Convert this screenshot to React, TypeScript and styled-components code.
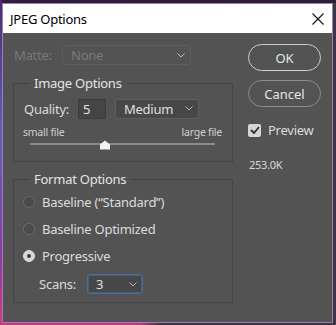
import React from "react";
import styled, { createGlobalStyle } from "styled-components";

const GlobalStyle = createGlobalStyle`
  html, body {
    margin: 0;
    padding: 0;
  }
  body {
    width: 336px;
    height: 325px;
    overflow: hidden;
    background: #3a3840;
    font-family: "Noto Sans", "Open Sans", sans-serif;
  }
`;

const Backdrop = styled.div`
  width: 336px;
  height: 325px;
  padding: 3px 3px 2px 2px;
  box-sizing: border-box;
  background:
    linear-gradient(90deg, #c2387c 0 140px, #3a3840 160px) left bottom / 100% 2px no-repeat,
    linear-gradient(180deg, #4a2f66 0%, #5a62b6 40%, #8b3f9c 80%, #d23b7c 100%) left top / 2px 100% no-repeat,
    linear-gradient(90deg, #2e1f3c 0%, #2a2230 100%) left top / 100% 3px no-repeat,
    #3a3a3e;
`;

const Dialog = styled.div`
  width: 331px;
  height: 320px;
  box-sizing: border-box;
  border: 1px solid #a676c6;
  display: flex;
  flex-direction: column;
  background: #535353;
  letter-spacing: -0.25px;
`;

const TitleBar = styled.div`
  height: 29px;
  background: #ffffff;
  display: flex;
  align-items: center;
  justify-content: space-between;
  padding: 0 8px 0 7px;
  color: #000;
  font-size: 13px;
`;

const Body = styled.div`
  flex: 1;
  display: flex;
  padding-left: 10px;
  gap: 15px;
`;

const LeftColumn = styled.div`
  width: 220px;
  display: flex;
  flex-direction: column;
`;

const RightColumn = styled.div`
  width: 73px;
  display: flex;
  flex-direction: column;
  padding-top: 11px;
`;

const MatteRow = styled.div`
  margin-top: 12px;
  height: 20px;
  display: flex;
  align-items: center;
  padding-left: 1px;
`;

const Label = styled.span<{ $disabled?: boolean; $width?: number }>`
  font-size: 13px;
  color: ${(p) => (p.$disabled ? "#787878" : "#dcdcdc")};
  ${(p) => (p.$width ? `width: ${p.$width}px;` : "")}
  flex-shrink: 0;
`;

const Select = styled.div<{ $width: number; $disabled?: boolean; $focused?: boolean }>`
  width: ${(p) => p.$width}px;
  height: 20px;
  box-sizing: border-box;
  border: 1px solid ${(p) => (p.$focused ? "#4d6d93" : p.$disabled ? "#5e5e5e" : "#5f5f5f")};
  ${(p) => (p.$focused ? "box-shadow: inset 0 0 0 1px #44607f;" : "")}
  border-radius: 3px;
  background: ${(p) => (p.$disabled ? "#535353" : "#474747")};
  display: flex;
  align-items: center;
  justify-content: space-between;
  padding: 0 5px 0 8px;
  font-size: 13px;
  color: ${(p) => (p.$disabled ? "#7a7a7a" : "#e0e0e0")};
`;

const Group = styled.fieldset<{ $top: number }>`
  margin: ${(p) => p.$top}px 0 0 0;
  padding: 0 10px;
  border: 1px solid #444444;
  min-width: 0;
`;

const Legend = styled.legend`
  margin-left: 6px;
  padding: 0 4px;
  font-size: 13px;
  line-height: 18px;
  color: #e4e4e4;
`;

const QualityRow = styled.div`
  margin-top: 6px;
  display: flex;
  align-items: center;
  height: 21px;
`;

const NumberBox = styled.div`
  margin-left: 11px;
  width: 28px;
  height: 20px;
  box-sizing: border-box;
  background: #454545;
  border: 1px solid #3c3c3c;
  font-size: 13px;
  color: #e6e6e6;
  display: flex;
  align-items: center;
  padding-left: 4px;
`;

const SliderLabels = styled.div`
  margin-top: 7px;
  margin-left: -1px;
  display: flex;
  justify-content: space-between;
  font-size: 10.5px;
  line-height: 13px;
  color: #d0d0d0;
`;

const SliderTrack = styled.div`
  position: relative;
  margin: 4px 7px 0 6px;
  height: 2px;
  background: #8a8a8a;
`;

const SliderThumb = styled.svg`
  position: absolute;
  top: -3px;
  width: 12px;
  height: 10px;
  margin-left: -6px;
`;

const SliderArea = styled.div`
  padding-bottom: 16px;
`;

const RadioRow = styled.div<{ $top: number }>`
  margin-top: ${(p) => p.$top}px;
  height: 20px;
  display: flex;
  align-items: center;
  gap: 7px;
  margin-left: -1px;
`;

const RadioDot = styled.span<{ $checked?: boolean }>`
  width: 12px;
  height: 12px;
  box-sizing: border-box;
  border-radius: 50%;
  border: 1px solid ${(p) => (p.$checked ? "#d8d8d8" : "#6a6a6a")};
  background: ${(p) => (p.$checked ? "#d8d8d8" : "#4a4a4a")};
  display: flex;
  align-items: center;
  justify-content: center;
  &::after {
    content: "";
    width: 4px;
    height: 4px;
    border-radius: 50%;
    background: ${(p) => (p.$checked ? "#3a3a3a" : "transparent")};
  }
`;

const ScansRow = styled.div`
  margin-top: 8px;
  margin-bottom: 8px;
  height: 20px;
  display: flex;
  align-items: center;
  padding-left: 15px;
`;

const PillButton = styled.button<{ $primary?: boolean; $top?: number }>`
  margin-top: ${(p) => p.$top ?? 0}px;
  width: 73px;
  height: 27px;
  border-radius: 14px;
  border: 1px solid ${(p) => (p.$primary ? "#cfcfcf" : "#8c8c8c")};
  background: transparent;
  color: #e6e6e6;
  font-family: "Noto Sans", "Open Sans", sans-serif;
  font-size: 13px;
  padding: 0;
`;

const CheckRow = styled.div`
  margin-top: 16px;
  display: flex;
  align-items: center;
  gap: 7px;
  height: 14px;
`;

const CheckBox = styled.span`
  width: 13px;
  height: 13px;
  border-radius: 2px;
  background: #d6d6d6;
  display: flex;
  align-items: center;
  justify-content: center;
`;

const FileSize = styled.div`
  margin-top: 20px;
  margin-left: 1px;
  font-size: 11px;
  color: #d8d8d8;
`;

const Chevron = () => (
  <svg width="8" height="5" viewBox="0 0 8 5">
    <path d="M0.5 0.5 L4 4 L7.5 0.5" fill="none" stroke="#b8b8b8" strokeWidth="1" />
  </svg>
);

export default function App() {
  const quality = 5;
  const thumbPos = ((quality - 0.5) / 12) * 100 + 3;
  return (
    <>
      <GlobalStyle />
      <Backdrop>
        <Dialog>
          <TitleBar>
            <span>JPEG Options</span>
            <svg width="12" height="12" viewBox="0 0 12 12">
              <path d="M0.5 0.5 L11.5 11.5 M11.5 0.5 L0.5 11.5" stroke="#111" strokeWidth="1.1" />
            </svg>
          </TitleBar>
          <Body>
            <LeftColumn>
              <MatteRow>
                <Label $disabled $width={48}>Matte:</Label>
                <Select $width={129} $disabled>
                  <span>None</span>
                  <Chevron />
                </Select>
              </MatteRow>

              <Group $top={9}>
                <Legend>Image Options</Legend>
                <QualityRow>
                  <Label $width={43}>Quality:</Label>
                  <NumberBox>{quality}</NumberBox>
                  <Select $width={84} style={{ marginLeft: 9 }}>
                    <span>Medium</span>
                    <Chevron />
                  </Select>
                </QualityRow>
                <SliderArea>
                  <SliderLabels>
                    <span>small file</span>
                    <span>large file</span>
                  </SliderLabels>
                  <SliderTrack>
                    <SliderThumb viewBox="0 0 12 10" style={{ left: `${thumbPos}%` }}>
                      <path d="M6 0.5 L11 4.5 L11 9.5 L1 9.5 L1 4.5 Z" fill="#f2f2f2" />
                    </SliderThumb>
                  </SliderTrack>
                </SliderArea>
              </Group>

              <Group $top={8}>
                <Legend>Format Options</Legend>
                <RadioRow $top={4}>
                  <RadioDot />
                  <Label>Baseline (“Standard”)</Label>
                </RadioRow>
                <RadioRow $top={7}>
                  <RadioDot />
                  <Label>Baseline Optimized</Label>
                </RadioRow>
                <RadioRow $top={7}>
                  <RadioDot $checked />
                  <Label>Progressive</Label>
                </RadioRow>
                <ScansRow>
                  <Label $width={48}>Scans:</Label>
                  <Select $width={56} $focused>
                    <span>3</span>
                    <Chevron />
                  </Select>
                </ScansRow>
              </Group>
            </LeftColumn>

            <RightColumn>
              <PillButton $primary>OK</PillButton>
              <PillButton $top={9}>Cancel</PillButton>
              <CheckRow>
                <CheckBox>
                  <svg width="10" height="8" viewBox="0 0 10 8">
                    <path d="M1 4 L4 7 L9 1" fill="none" stroke="#2e2e2e" strokeWidth="1.8" />
                  </svg>
                </CheckBox>
                <Label>Preview</Label>
              </CheckRow>
              <FileSize>253.0K</FileSize>
            </RightColumn>
          </Body>
        </Dialog>
      </Backdrop>
    </>
  );
}
